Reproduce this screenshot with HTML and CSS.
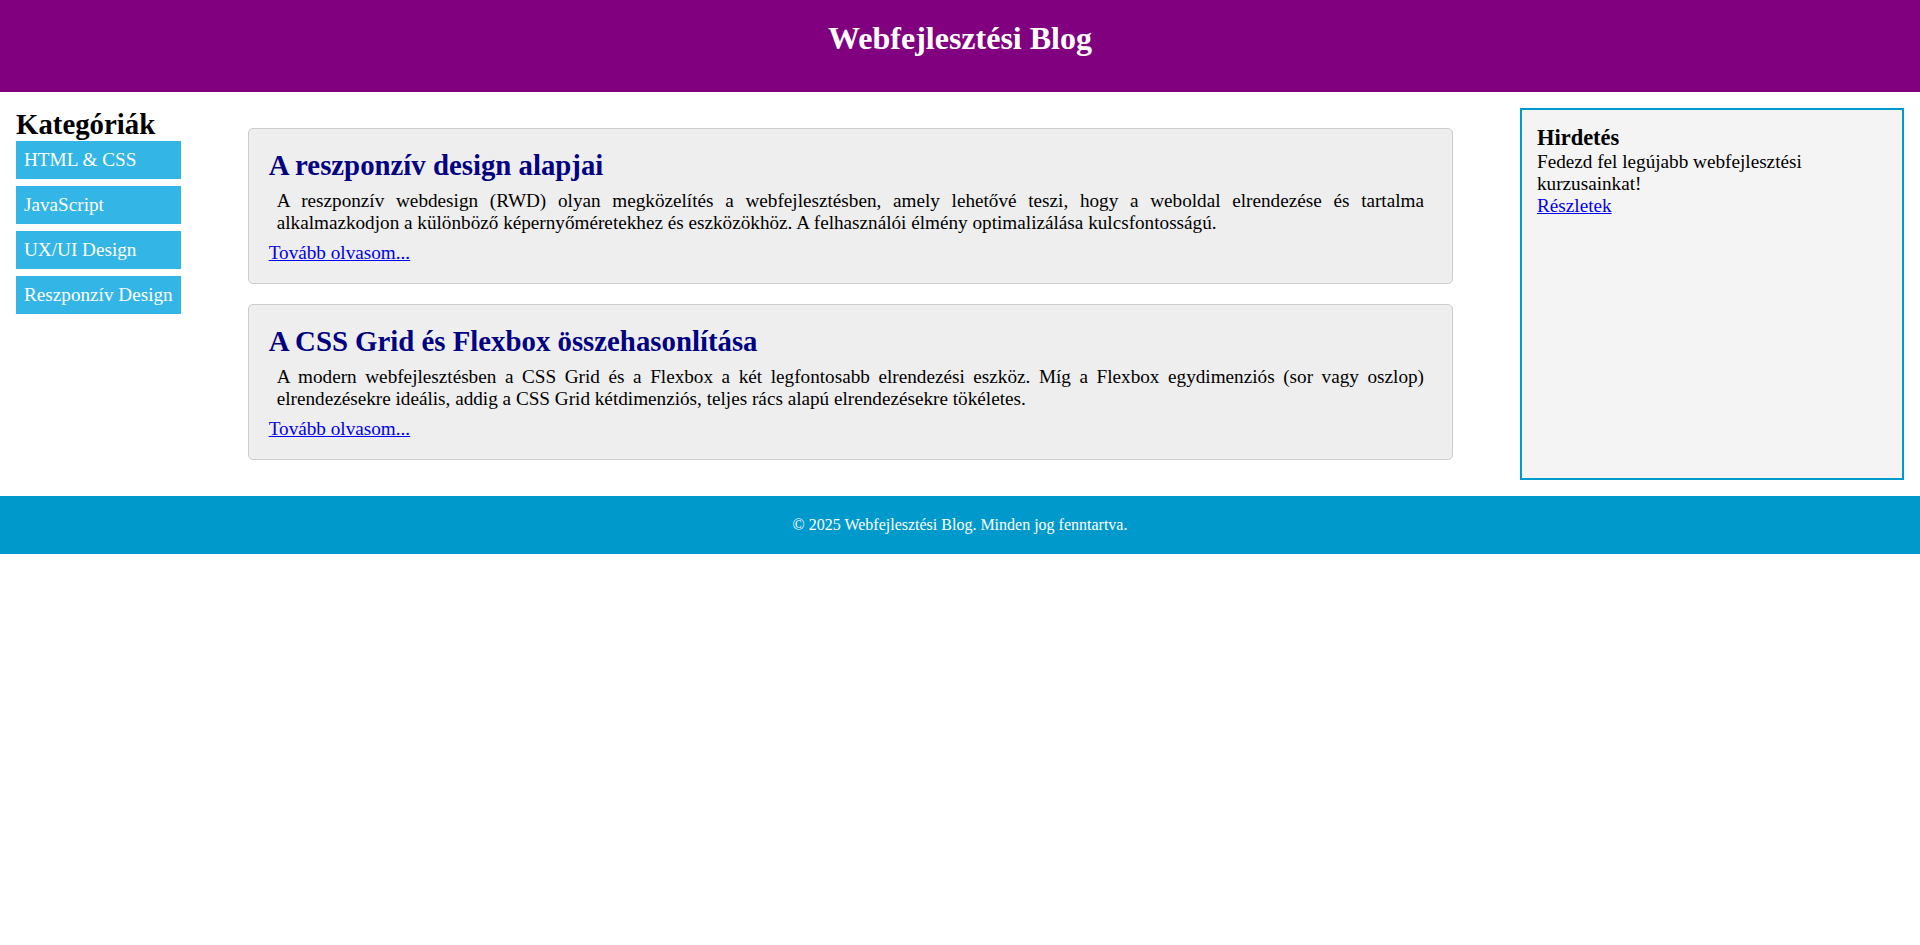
FILE: index.html
```html
<!DOCTYPE html>
<html lang="hu">
<head>
<meta charset="utf-8">
<title>Webfejlesztési Blog</title>
<link rel="stylesheet" href="styles.css">
</head>
<body>
<header class="site-header">
  <h1 class="site-title">Webfejlesztési Blog</h1>
</header>
<div class="layout">
  <aside class="categories">
    <h2 class="categories-title">Kategóriák</h2>
    <ul class="cat-list">
      <li><a class="cat-link" href="#">HTML &amp; CSS</a></li>
      <li><a class="cat-link" href="#">JavaScript</a></li>
      <li><a class="cat-link" href="#">UX/UI Design</a></li>
      <li><a class="cat-link" href="#">Reszponzív Design</a></li>
    </ul>
  </aside>
  <main class="posts">
    <article class="post">
      <h2 class="post-title">A reszponzív design alapjai</h2>
      <p class="post-text">A reszponzív webdesign (RWD) olyan megközelítés a webfejlesztésben, amely lehetővé teszi, hogy a weboldal elrendezése és tartalma alkalmazkodjon a különböző képernyőméretekhez és eszközökhöz. A felhasználói élmény optimalizálása kulcsfontosságú.</p>
      <a class="post-more" href="#">Tovább olvasom...</a>
    </article>
    <article class="post">
      <h2 class="post-title">A CSS Grid és Flexbox összehasonlítása</h2>
      <p class="post-text">A modern webfejlesztésben a CSS Grid és a Flexbox a két legfontosabb elrendezési eszköz. Míg a Flexbox egydimenziós (sor vagy oszlop) elrendezésekre ideális, addig a CSS Grid kétdimenziós, teljes rács alapú elrendezésekre tökéletes.</p>
      <a class="post-more" href="#">Tovább olvasom...</a>
    </article>
  </main>
  <aside class="ad">
    <h3 class="ad-title">Hirdetés</h3>
    <p class="ad-text">Fedezd fel legújabb webfejlesztési kurzusainkat!</p>
    <a class="ad-link" href="#">Részletek</a>
  </aside>
</div>
<footer class="site-footer">
  <p class="footer-text">© 2025 Webfejlesztési Blog. Minden jog fenntartva.</p>
</footer>
</body>
</html>
```

FILE: styles.css
```css
html, body {
  margin: 0;
  padding: 0;
}

body {
  font-family: "Liberation Serif", "Times New Roman", serif;
  font-size: 19.2px;
  color: #000;
  background: #fff;
}

.site-header {
  background: #800080;
  color: #fff;
  text-align: center;
  padding: 20px 0 35px;
}

.site-title {
  margin: 0;
  font-size: 32px;
  font-weight: bold;
}

.layout {
  display: grid;
  grid-template-columns: max-content 1fr 384px;
  column-gap: 67px;
  padding: 16px;
}

.categories-title {
  margin: 0;
  font-size: 28.8px;
  font-weight: bold;
}

.cat-list {
  list-style: none;
  margin: 0;
  padding: 0;
  display: flex;
  flex-direction: column;
  gap: 7px;
}

.cat-link {
  display: block;
  background: #33b5e5;
  color: #fff;
  text-decoration: none;
  padding: 8px;
}

.posts {
  padding: 20px 0;
  display: flex;
  flex-direction: column;
  gap: 20px;
}

.post {
  background: #eeeeee;
  border: 1px solid #cccccc;
  border-radius: 5px;
  padding: 20px 20px 19px;
}

.post-title {
  margin: 0;
  font-size: 28.8px;
  font-weight: bold;
  color: #000080;
}

.post-text {
  margin: 8px;
  text-align: justify;
}

.post-more,
.ad-link {
  color: #0000ee;
  text-decoration: underline;
}

.ad {
  background: #f4f4f4;
  border: 2px solid #0099cc;
  padding: 15px;
}

.ad-title {
  margin: 0;
  font-size: 22.46px;
  font-weight: bold;
}

.ad-text {
  margin: 0;
}

.site-footer {
  background: #0099cc;
  color: #fff;
  text-align: center;
  padding: 20px;
}

.footer-text {
  margin: 0;
  font-size: 16px;
}
```
